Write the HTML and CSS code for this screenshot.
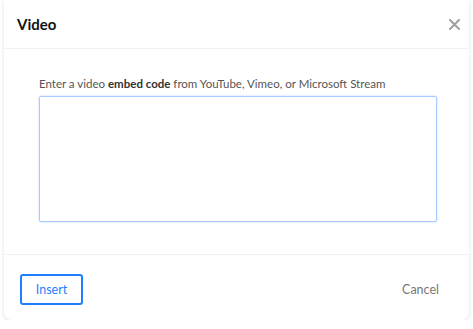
FILE: index.html
```html
<!DOCTYPE html>
<html lang="en">
<head>
  <meta charset="UTF-8">
  <meta name="viewport" content="width=device-width, initial-scale=1.0">
  <title>Video</title>
  <link rel="stylesheet" href="styles.css">
</head>
<body>
  <div class="dialog">
    <div class="dialog-header">
      <h2>Video</h2>
      <button class="close" aria-label="Close">
        <svg width="11" height="11" viewBox="0 0 11 11"><path d="M1 1L10 10M10 1L1 10" stroke="#a0a0a0" stroke-width="2" stroke-linecap="round"/></svg>
      </button>
    </div>
    <div class="dialog-body">
      <label for="embed">Enter a video <b>embed code</b> from YouTube, Vimeo, or Microsoft Stream</label>
      <textarea id="embed"></textarea>
    </div>
    <div class="dialog-footer">
      <button class="btn-insert">Insert</button>
      <button class="btn-cancel">Cancel</button>
    </div>
  </div>
</body>
</html>
```

FILE: styles.css
```css
body {
  margin: 0;
  padding: 0 4px;
  background: #fff;
  font-family: Lato, "Open Sans", sans-serif;
}
.dialog {
  background: #fff;
  border-radius: 0 0 8px 8px;
  box-shadow: 0 1px 4px rgba(0, 0, 0, 0.12);
}
.dialog-header {
  height: 48px;
  display: flex;
  align-items: center;
  justify-content: space-between;
  padding: 0 5px 0 13px;
  border-bottom: 1px solid #f0f0f0;
}
.dialog-header h2 {
  margin: 0;
  font-size: 15px;
  font-weight: bold;
  color: #111;
}
.close {
  background: none;
  border: none;
  padding: 4px;
  display: flex;
  cursor: pointer;
}
.dialog-body {
  padding: 28px 32px 32px 35px;
  display: flex;
  flex-direction: column;
}
.dialog-body label {
  font-size: 11.5px;
  color: #555;
  margin-bottom: 6px;
}
.dialog-body label b {
  color: #333;
}
.dialog-body textarea {
  width: 398px;
  height: 126px;
  box-sizing: border-box;
  border: 1px solid #a9cbff;
  border-radius: 2px;
  box-shadow: 0 0 2px rgba(100, 160, 255, 0.5);
  resize: none;
  outline: none;
}
.dialog-footer {
  border-top: 1px solid #f0f0f0;
  height: 62px;
  padding: 3px 16px 0;
  display: flex;
  align-items: center;
  justify-content: space-between;
}
.btn-insert {
  width: 63px;
  height: 31px;
  background: #fff;
  border: 2px solid #1e7fff;
  border-radius: 3px;
  color: #1e7fff;
  font-family: inherit;
  font-size: 12.5px;
  cursor: pointer;
}
.btn-cancel {
  background: none;
  border: none;
  color: #777;
  font-family: inherit;
  font-size: 12.5px;
  padding: 8px 14px;
  cursor: pointer;
}
```
